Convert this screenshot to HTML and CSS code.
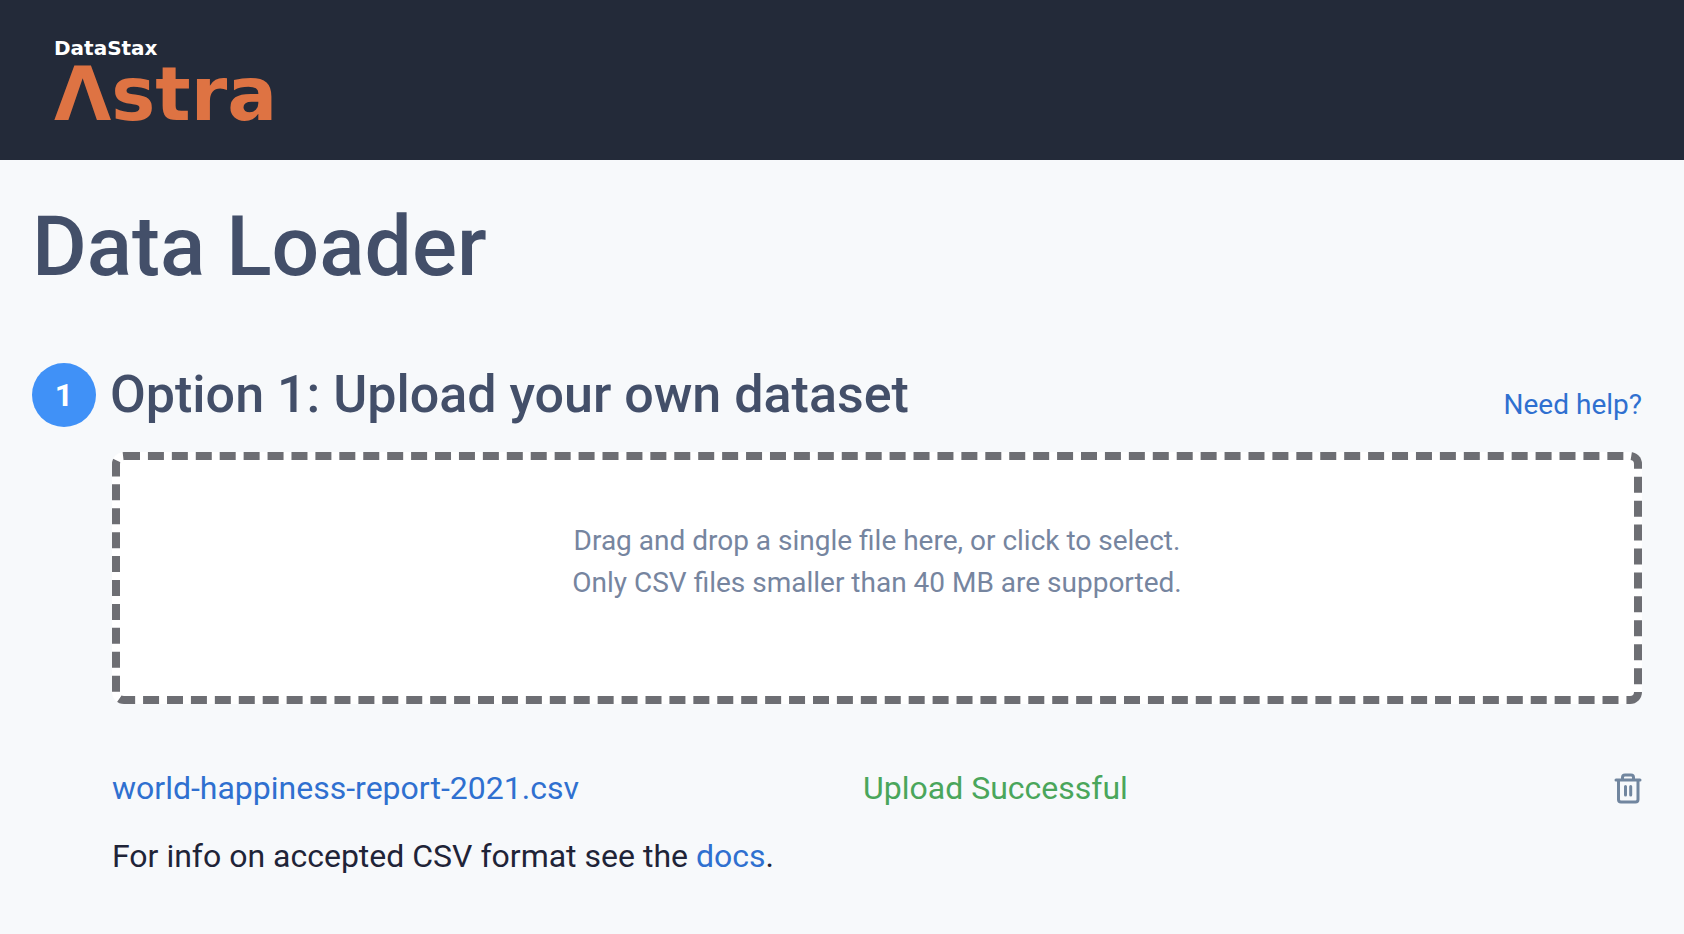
FILE: index.html
```html
<!DOCTYPE html>
<html lang="en">
<head>
<meta charset="utf-8">
<title>Data Loader</title>
<link rel="stylesheet" href="styles.css">
</head>
<body>
<header class="topbar">
  <a class="brand" href="#" aria-label="DataStax Astra">
    <span class="brand-company">DataStax</span>
    <span class="brand-product">Λstra</span>
  </a>
</header>
<main class="page">
  <h1 class="page-title">Data Loader</h1>
  <section class="option">
    <div class="option-head">
      <span class="step">1</span>
      <h2 class="option-title">Option 1: Upload your own dataset</h2>
      <a class="help" href="#">Need help?</a>
    </div>
    <div class="option-body">
      <label class="dropzone" for="dataset">
        <input class="file-input" id="dataset" type="file" accept=".csv">
        <span>Drag and drop a single file here, or click to select.</span>
        <span>Only CSV files smaller than 40 MB are supported.</span>
      </label>
      <div class="upload">
        <a href="#">world-happiness-report-2021.csv</a>
        <span class="status">Upload Successful</span>
        <button class="delete" type="button" aria-label="Delete file">
          <svg class="trash" viewBox="0 0 28 32" aria-hidden="true">
            <path d="M2 8H26M4.500 8V27.500Q4.500 30 7 30H21.500Q24 30 24 27.500V8M8.500 8V5.500Q8.500 3 11 3H17Q19.500 3 19.500 5.500V8M11.500 14.500V23M16.700 14.500V23"/>
          </svg>
        </button>
      </div>
      <p class="note">For info on accepted CSV format see the <a href="#">docs</a>.</p>
    </div>
  </section>
</main>
</body>
</html>
```
FILE: styles.css
```css
* {
  box-sizing: border-box;
}

body {
  margin: 0;
  background: #f7f9fb;
  color: #1f2438;
  font: 400 32px/48px Roboto, sans-serif;
}

a {
  color: #2f70d0;
  text-decoration: none;
}

.topbar {
  display: flex;
  min-height: 160px;
  padding: 36px 54px 30px;
  background: #232a39;
}

.brand {
  display: flex;
  flex-direction: column;
  font-family: "DejaVu Sans", sans-serif;
  font-weight: 700;
}

.brand-company {
  color: #fff;
  font-size: 20px;
  line-height: 24px;
}

.brand-product {
  color: #de7343;
  font-size: 74px;
  line-height: 68px;
}

.page {
  padding: 37px 42px 52px 32px;
}

.page-title {
  margin: 0 0 66px;
  color: #434f69;
  font-size: 84px;
  font-weight: 500;
  line-height: 100px;
}

.option-head {
  display: flex;
  align-items: flex-end;
  margin-bottom: 25px;
}

.step {
  display: flex;
  align-items: center;
  justify-content: center;
  width: 64px;
  height: 64px;
  border-radius: 50%;
  background: #4091f7;
  color: #fff;
  font-weight: 700;
}

.option-title {
  flex: 1;
  margin: 0 0 0 14px;
  color: #434f69;
  font-size: 52px;
  font-weight: 500;
  line-height: 64px;
}

.help {
  font-size: 28px;
  line-height: 44px;
}

.option-body {
  padding-left: 80px;
}

.dropzone {
  display: flex;
  flex-direction: column;
  align-items: center;
  padding: 60px 20px 92px;
  border: 8px dashed #6d6e73;
  border-radius: 12px;
  background: #fff;
  color: #76859f;
  font-size: 28px;
  line-height: 42px;
  cursor: pointer;
}

.file-input {
  position: absolute;
  width: 1px;
  height: 1px;
  opacity: 0;
}

.upload {
  display: grid;
  grid-template-columns: 1fr 1fr 28px;
  align-items: center;
  margin-top: 60px;
}

.status {
  color: #4aa65b;
}

.delete {
  display: flex;
  padding: 0;
  border: 0;
  background: none;
  cursor: pointer;
}

.trash {
  width: 28px;
  height: 32px;
  fill: none;
  stroke: #71869f;
  stroke-width: 3;
  stroke-linecap: round;
  stroke-linejoin: round;
}

.note {
  margin: 20px 0 0;
}
```
